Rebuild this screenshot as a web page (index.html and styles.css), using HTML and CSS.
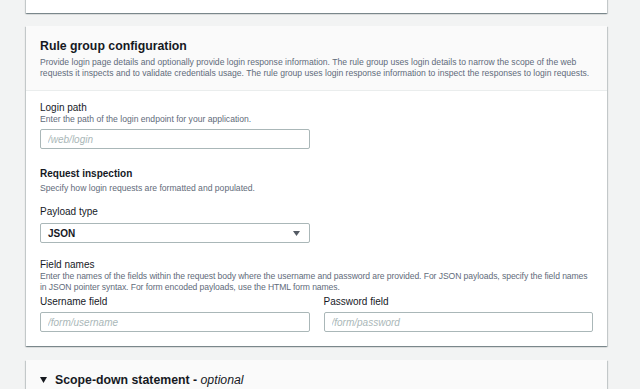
FILE: index.html
```html
<!DOCTYPE html>
<html lang="en">
<head>
  <meta charset="UTF-8">
  <meta name="viewport" content="width=device-width, initial-scale=1.0">
  <title>Rule group configuration</title>
  <link rel="stylesheet" href="styles.css">
</head>
<body>
  <div class="page">
    <div class="card stub"></div>

    <div class="card">
      <div class="card-header">
        <h2>Rule group configuration</h2>
        <p class="desc">Provide login page details and optionally provide login response information. The rule group uses login details to narrow the scope of the web requests it inspects and to validate credentials usage. The rule group uses login response information to inspect the responses to login requests.</p>
      </div>
      <div class="card-body">
        <div class="field">
          <label for="login-path">Login path</label>
          <p class="desc">Enter the path of the login endpoint for your application.</p>
          <input type="text" id="login-path" class="half" placeholder="/web/login">
        </div>

        <div class="section">
          <h3>Request inspection</h3>
          <p class="desc">Specify how login requests are formatted and populated.</p>
        </div>

        <div class="field payload">
          <label for="payload">Payload type</label>
          <div class="select half" id="payload">
            <span>JSON</span>
            <svg width="7" height="5" viewBox="0 0 7 5"><polygon points="0,0 7,0 3.5,5" fill="#545b64"/></svg>
          </div>
        </div>

        <div class="field names">
          <label>Field names</label>
          <p class="desc">Enter the names of the fields within the request body where the username and password are provided. For JSON payloads, specify the field names in JSON pointer syntax. For form encoded payloads, use the HTML form names.</p>
          <div class="columns">
            <div>
              <label for="username">Username field</label>
              <input type="text" id="username" placeholder="/form/username">
            </div>
            <div>
              <label for="password">Password field</label>
              <input type="text" id="password" placeholder="/form/password">
            </div>
          </div>
        </div>
      </div>
    </div>

    <div class="card">
      <div class="card-header expand">
        <svg width="7" height="6" viewBox="0 0 7 6"><polygon points="0,0 7,0 3.5,6" fill="#16191f"/></svg>
        <h2>Scope-down statement - <i>optional</i></h2>
      </div>
    </div>
  </div>
</body>
</html>
```

FILE: styles.css
```css
body {
  font-family: 'Liberation Sans', Arial, sans-serif;
  background-color: #f2f3f3;
  color: #16191f;
  margin: 0;
  padding: 0;
  overflow: hidden;
}
.page {
  width: 581px;
  margin-left: 26px;
}
.card {
  background-color: #ffffff;
  box-shadow: 0 1px 1px 0 rgba(0, 28, 36, 0.3), 1px 1px 1px 0 rgba(0, 28, 36, 0.15), -1px 1px 1px 0 rgba(0, 28, 36, 0.15);
  margin-bottom: 14px;
}
.stub {
  height: 17px;
  margin-top: -4px;
  margin-bottom: 13px;
}
.card-header {
  background-color: #fafafa;
  border-bottom: 1px solid #eaeded;
  padding: 12px 14px 11px;
}
h2 {
  margin: 0;
  font-size: 12.3px;
  line-height: 16px;
  font-weight: bold;
}
h2 i {
  font-weight: normal;
}
h3 {
  margin: 0;
  font-size: 10px;
  line-height: 13px;
  font-weight: bold;
}
.desc {
  margin: 0;
  font-size: 8.6px;
  line-height: 11px;
  color: #5f6b7a;
}
.card-header .desc {
  margin-top: 3px;
}
.card-body {
  padding: 10px 14px 14px;
}
label {
  display: block;
  font-size: 10px;
  line-height: 13px;
}
input, .select {
  box-sizing: border-box;
  display: block;
  width: 100%;
  height: 20px;
  margin: 4px 0 0;
  padding: 0 7px;
  border: 1px solid #aab7b8;
  border-radius: 2px;
  background-color: #ffffff;
  font-family: inherit;
  font-size: 10px;
  color: #16191f;
}
input::placeholder {
  color: #aab7b8;
  font-style: italic;
}
.half {
  width: calc(50% - 7px);
}
.section {
  margin-top: 18px;
}
.section .desc {
  margin-top: 3px;
}
.payload {
  margin-top: 11px;
}
.select {
  display: flex;
  align-items: center;
  justify-content: space-between;
  margin-top: 5px;
  padding-right: 9px;
  font-weight: bold;
}
.names {
  margin-top: 15px;
}
.names .desc {
  letter-spacing: -0.08px;
}
.columns {
  display: grid;
  grid-template-columns: 1fr 1fr;
  gap: 14px;
  margin-top: 2px;
}
.card-header.expand {
  display: flex;
  align-items: center;
  gap: 8px;
  border-bottom: none;
  padding: 12px 14px 20px 14px;
}
```
